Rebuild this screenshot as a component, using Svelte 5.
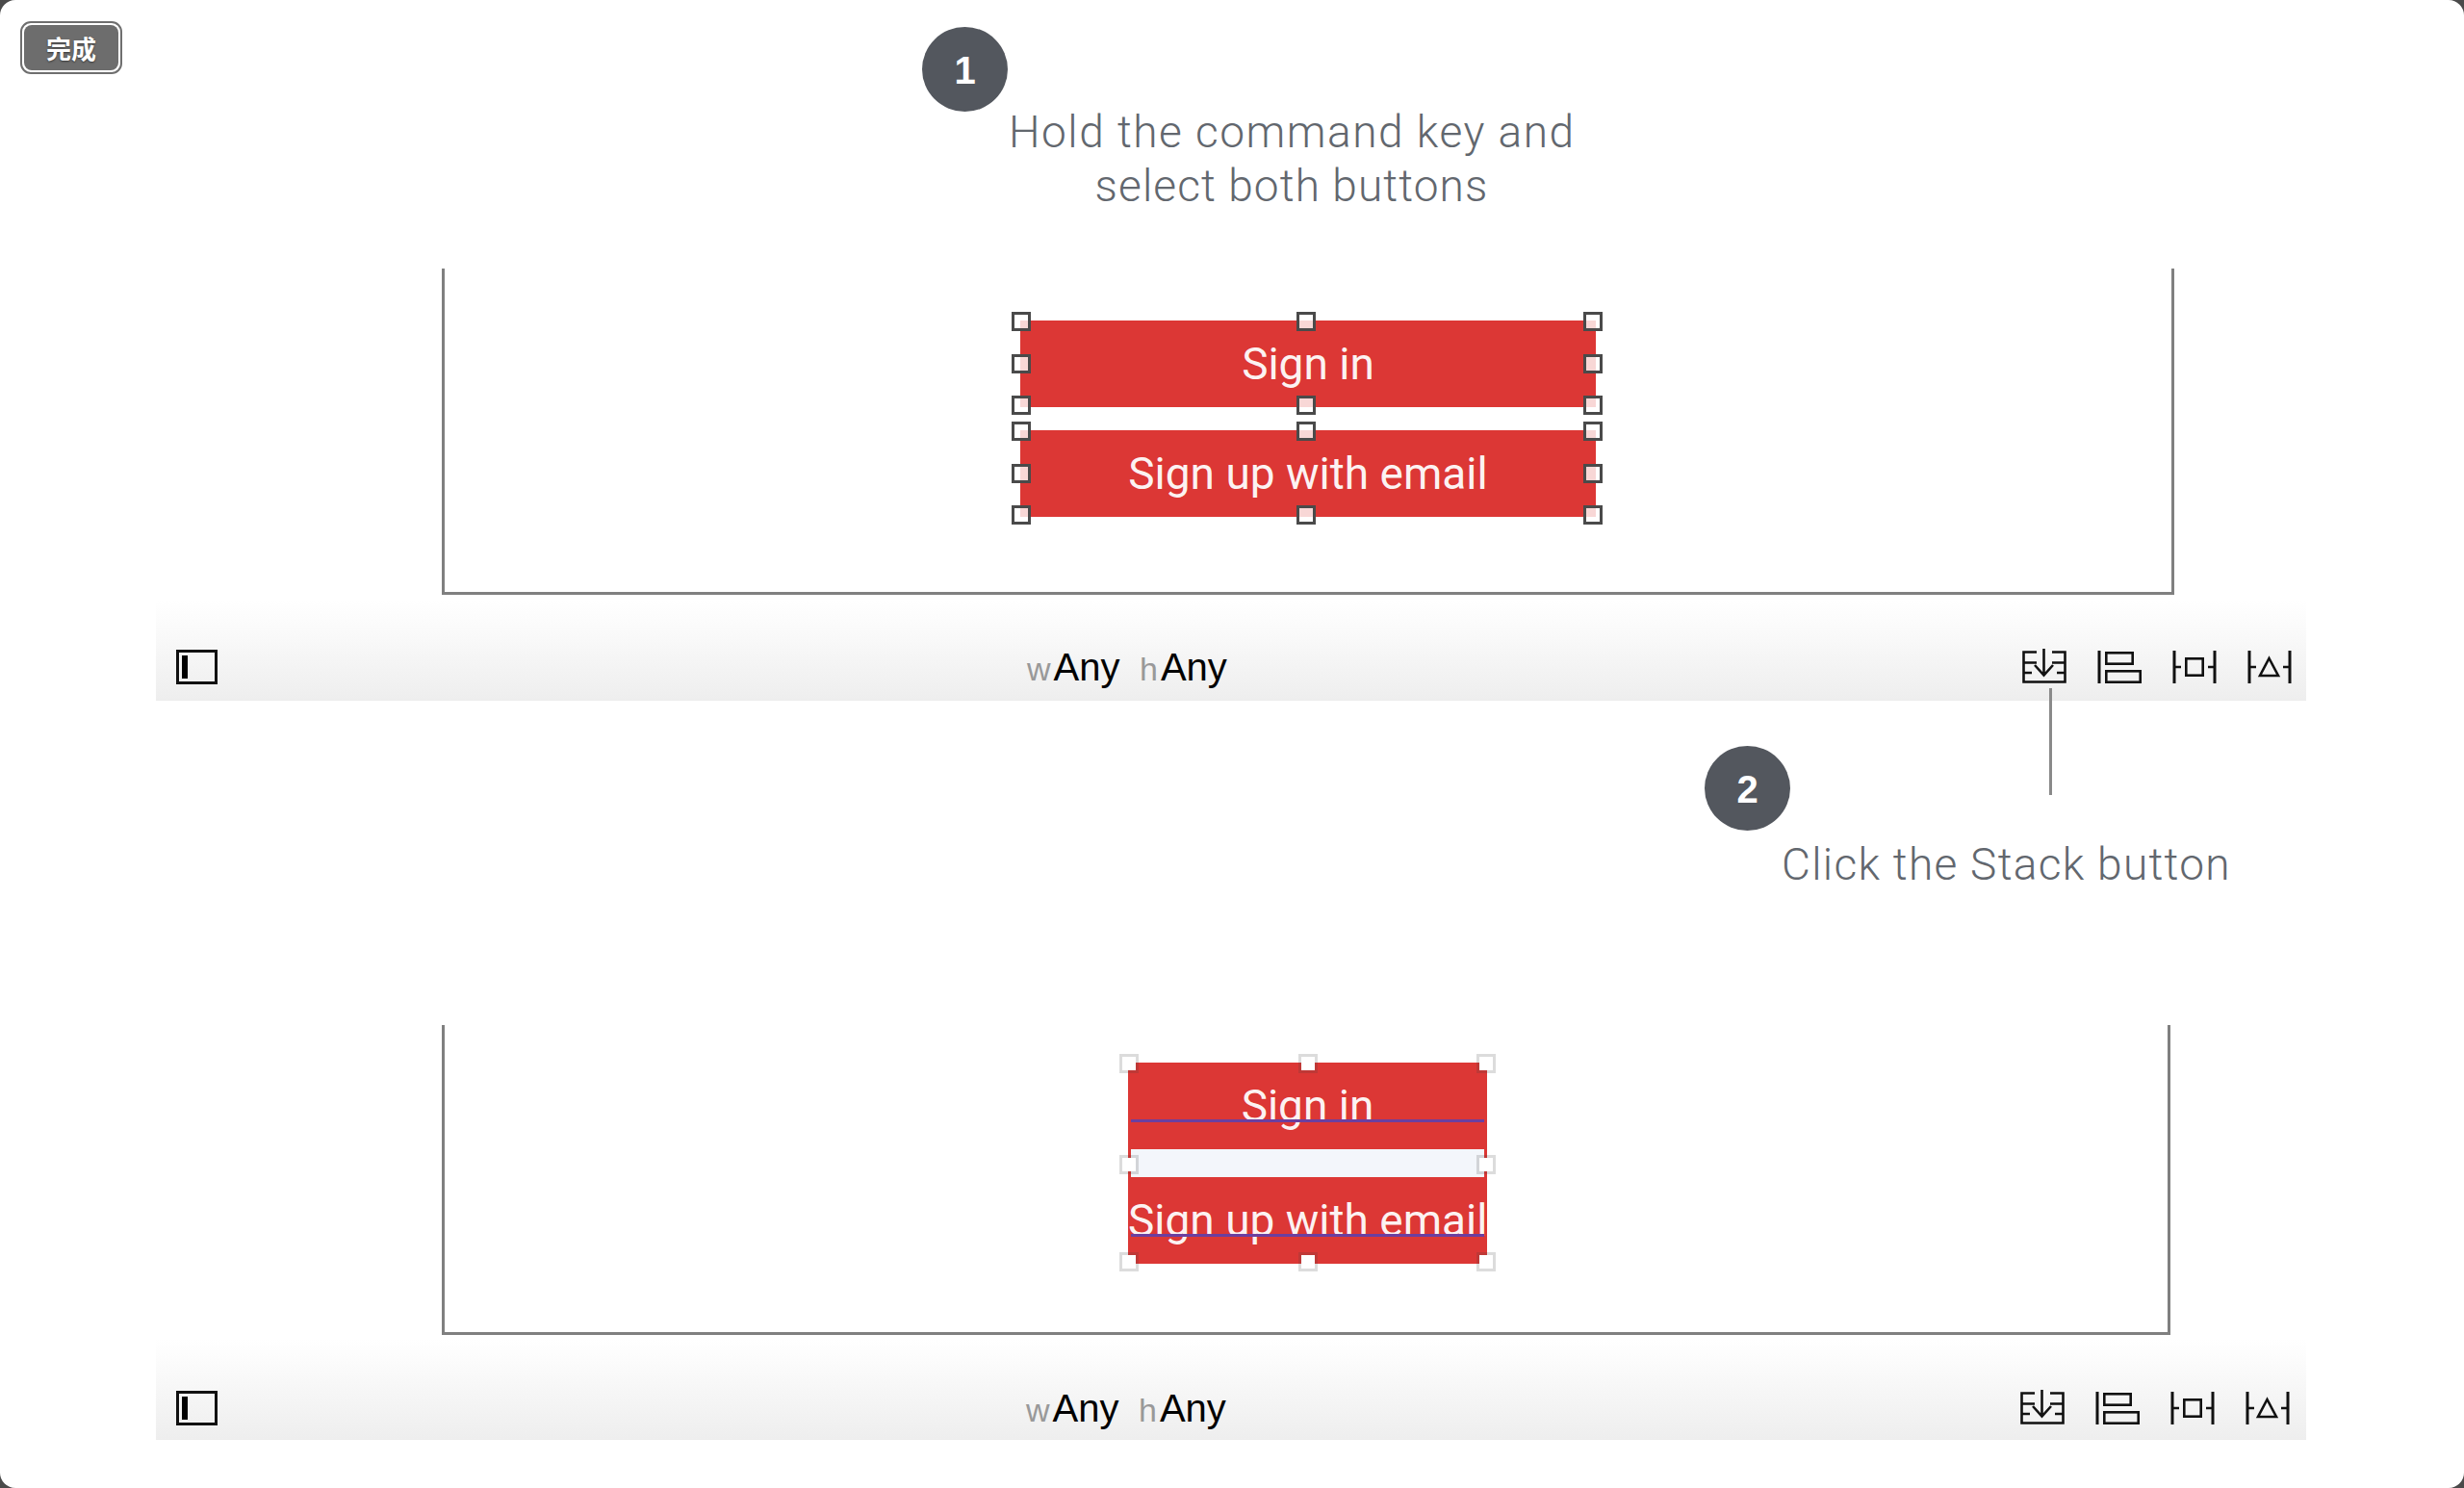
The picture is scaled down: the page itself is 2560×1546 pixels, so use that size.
<script lang="ts">
  // handle centres inside a selected button, as fractions of its box
  const spots = [
    [0.002, 0.01], [0.497, 0.01], [0.995, 0.01],
    [0.002, 0.5], [0.995, 0.5],
    [0.002, 0.98], [0.497, 0.98], [0.995, 0.98]
  ];
  const stackSpots = [
    [0.003, 0.005], [0.5, 0.005], [0.997, 0.005],
    [0.003, 0.507], [0.997, 0.507],
    [0.003, 0.99], [0.5, 0.99], [0.997, 0.99]
  ];
</script>

{#snippet toolbar(low)}
  <div class="toolbar" class:low>
    <svg class="sidebar-icon" width="43" height="36" viewBox="0 0 43 36">
      <rect x="1.5" y="1.5" width="40" height="33" fill="none" stroke="#111" stroke-width="3" />
      <rect x="6" y="6" width="6" height="24" fill="#000" />
    </svg>
    <div class="size-class">
      <span class="dim">w</span><span class="any">Any</span>
      <span class="dim h">h</span><span class="any">Any</span>
    </div>
    <div class="tools">
      <svg width="46" height="38" viewBox="0 0 46 38" fill="none" stroke="#111" stroke-width="2.6">
        <path d="M15 3.5H1.5V34.5H44.5V3.5H31M1.5 14.5H15M31 14.5H44.5M1.5 25H10M36 25H44.5" />
        <path d="M22.5 0V28M13 17L22.5 27.5L32 17" />
      </svg>
      <svg width="46" height="38" viewBox="0 0 46 38" fill="none" stroke="#111" stroke-width="2.6">
        <path d="M2 2V36" stroke-width="3" />
        <rect x="9.3" y="4.3" width="27.4" height="11.4" />
        <rect x="9.3" y="23.3" width="35.4" height="11.4" />
      </svg>
      <svg width="46" height="38" viewBox="0 0 46 38" fill="none" stroke="#111" stroke-width="2.6">
        <path d="M2 2V36M44 2V36" stroke-width="3" />
        <path d="M2 19H9M37 19H44" />
        <rect x="14.3" y="10.3" width="17.4" height="17.4" />
      </svg>
      <svg width="46" height="38" viewBox="0 0 46 38" fill="none" stroke="#111" stroke-width="2.6">
        <path d="M2 2V36M44 2V36" stroke-width="3" />
        <path d="M2 19H9M37 19H44" />
        <path d="M22.5 10L32 28H13Z" />
      </svg>
    </div>
  </div>
{/snippet}

<div class="page">
  <button type="button" class="done"><span>完成</span></button>

  <section class="step">
    <div class="callout one">
      <div class="badge">1</div>
      <p class="note">Hold the command key and<br /><span class="tight">select both buttons</span></p>
    </div>
    <div class="canvas first">
      <div class="picked">
        <div class="red">Sign in</div>
        {#each spots as [x, y]}
          <i class="handle" style="left: {x * 100}%; top: {y * 100}%"></i>
        {/each}
      </div>
      <div class="picked">
        <div class="red">Sign up with email</div>
        {#each spots as [x, y]}
          <i class="handle" style="left: {x * 100}%; top: {y * 100}%"></i>
        {/each}
      </div>
    </div>
    {@render toolbar(false)}
  </section>

  <section class="step">
    <div class="callout two">
      <div class="leader"></div>
      <div class="badge">2</div>
      <p class="note">Click the Stack button</p>
    </div>
    <div class="canvas second">
      <div class="stack">
        <div class="red">Sign in<b class="baseline"></b></div>
        <div class="spacer"></div>
        <div class="red">Sign up with email<b class="baseline"></b></div>
        {#each stackSpots as [x, y]}
          <i class="handle pale" style="left: {x * 100}%; top: {y * 100}%"></i>
        {/each}
      </div>
    </div>
    {@render toolbar(true)}
  </section>
</div>

<style>
  :global(body) {
    background: #4a4a4a;
  }

  .page {
    position: relative;
    width: 2560px;
    height: 1546px;
    overflow: hidden;
    border-radius: 16px;
    background: #fff;
    font-family: "Liberation Sans", Arial, sans-serif;
  }

  .done {
    position: absolute;
    left: 21px;
    top: 22px;
    width: 106px;
    height: 55px;
    padding: 2px;
    border: 2px solid #6f6f6f;
    border-radius: 11px;
    background: #fff;
  }

  .done span {
    display: block;
    height: 100%;
    border-radius: 8px;
    background: #6d6d6d;
    color: #fff;
    font: 700 26px/47px "Noto Sans CJK SC", sans-serif;
    text-shadow: 0 1px 2px rgba(0, 0, 0, 0.5);
  }

  .step {
    margin-left: 162px;
    width: 2234px;
  }

  .callout {
    position: relative;
  }

  .callout.one {
    height: 279px;
    padding-top: 28px;
    box-sizing: border-box;
  }

  .callout.two {
    height: 337px;
    padding-top: 47px;
    box-sizing: border-box;
  }

  .badge {
    width: 89px;
    height: 88px;
    border-radius: 50%;
    background: #53575e;
    color: #fff;
    font: 700 40px/91px "Liberation Sans", Arial, sans-serif;
    text-align: center;
  }

  .one .badge {
    margin-left: 796px;
  }

  .two .badge {
    margin-left: 1609px;
  }

  .note {
    margin: 0;
    color: #62676e;
    font: 300 46px/56px Roboto, "Liberation Sans", sans-serif;
    letter-spacing: 1.5px;
    white-space: nowrap;
  }

  .tight {
    letter-spacing: 1.1px;
  }

  .one .note {
    width: 588px;
    margin-left: 886px;
    margin-top: -7px;
    text-align: center;
  }

  .two .note {
    margin-left: 1689px;
    margin-top: 7px;
    letter-spacing: 1.3px;
  }

  .leader {
    position: absolute;
    left: 1967px;
    top: -13px;
    width: 3px;
    height: 111px;
    background: #8a8a8a;
  }

  .canvas {
    display: flex;
    flex-direction: column;
    align-items: center;
    box-sizing: border-box;
    border: 3px solid #808080;
    border-top: none;
  }

  .canvas.first {
    width: 1800px;
    height: 339px;
    margin-left: 297px;
    padding-top: 54px;
    gap: 24px;
  }

  .canvas.second {
    width: 1796px;
    height: 322px;
    margin-left: 297px;
    padding-top: 39px;
    padding-left: 3px;
  }

  .picked {
    position: relative;
    width: 598px;
    height: 90px;
  }

  .red {
    position: relative;
    height: 90px;
    background: #dc3735;
    color: rgba(255, 255, 255, 0.94);
    font: 400 46px/91px Roboto, "Liberation Sans", sans-serif;
    text-align: center;
    white-space: nowrap;
  }

  .stack {
    position: relative;
    width: 373px;
    background: #dc3735;
  }

  .spacer {
    height: 29px;
    margin: 0 3px;
    background: #f3f6fb;
  }

  .baseline {
    position: absolute;
    left: 3px;
    right: 3px;
    top: 59px;
    height: 3px;
    background: #6b3fa0;
  }

  .handle {
    position: absolute;
    width: 20px;
    height: 20px;
    box-sizing: border-box;
    margin: -10px 0 0 -10px;
    border: 3px solid #4a4a4a;
    background: rgba(255, 255, 255, 0.8);
  }

  .handle.pale {
    border-color: rgba(60, 60, 60, 0.18);
    background: #fff;
    background-clip: padding-box;
  }

  .toolbar {
    display: flex;
    align-items: center;
    box-sizing: border-box;
    height: 105px;
    margin-top: 5px;
    padding: 35px 15px 0 21px;
    background: linear-gradient(#fff, #fcfcfc 20%, #eee);
    border-bottom: 1px solid #ececec;
  }

  .toolbar.low {
    margin-top: 4px;
    padding-top: 40px;
    padding-right: 17px;
  }

  .sidebar-icon {
    flex: none;
  }

  .size-class {
    margin-left: 841px;
    margin-top: 1px;
    white-space: nowrap;
    color: #000;
  }

  .low .size-class {
    margin-left: 840px;
  }

  .any {
    font-size: 40px;
  }

  .dim {
    color: #999;
    font-size: 34px;
    margin-right: 3px;
  }

  .dim.h {
    margin-left: 16px;
  }

  .tools {
    display: flex;
    gap: 32px;
    margin-left: auto;
  }
</style>
